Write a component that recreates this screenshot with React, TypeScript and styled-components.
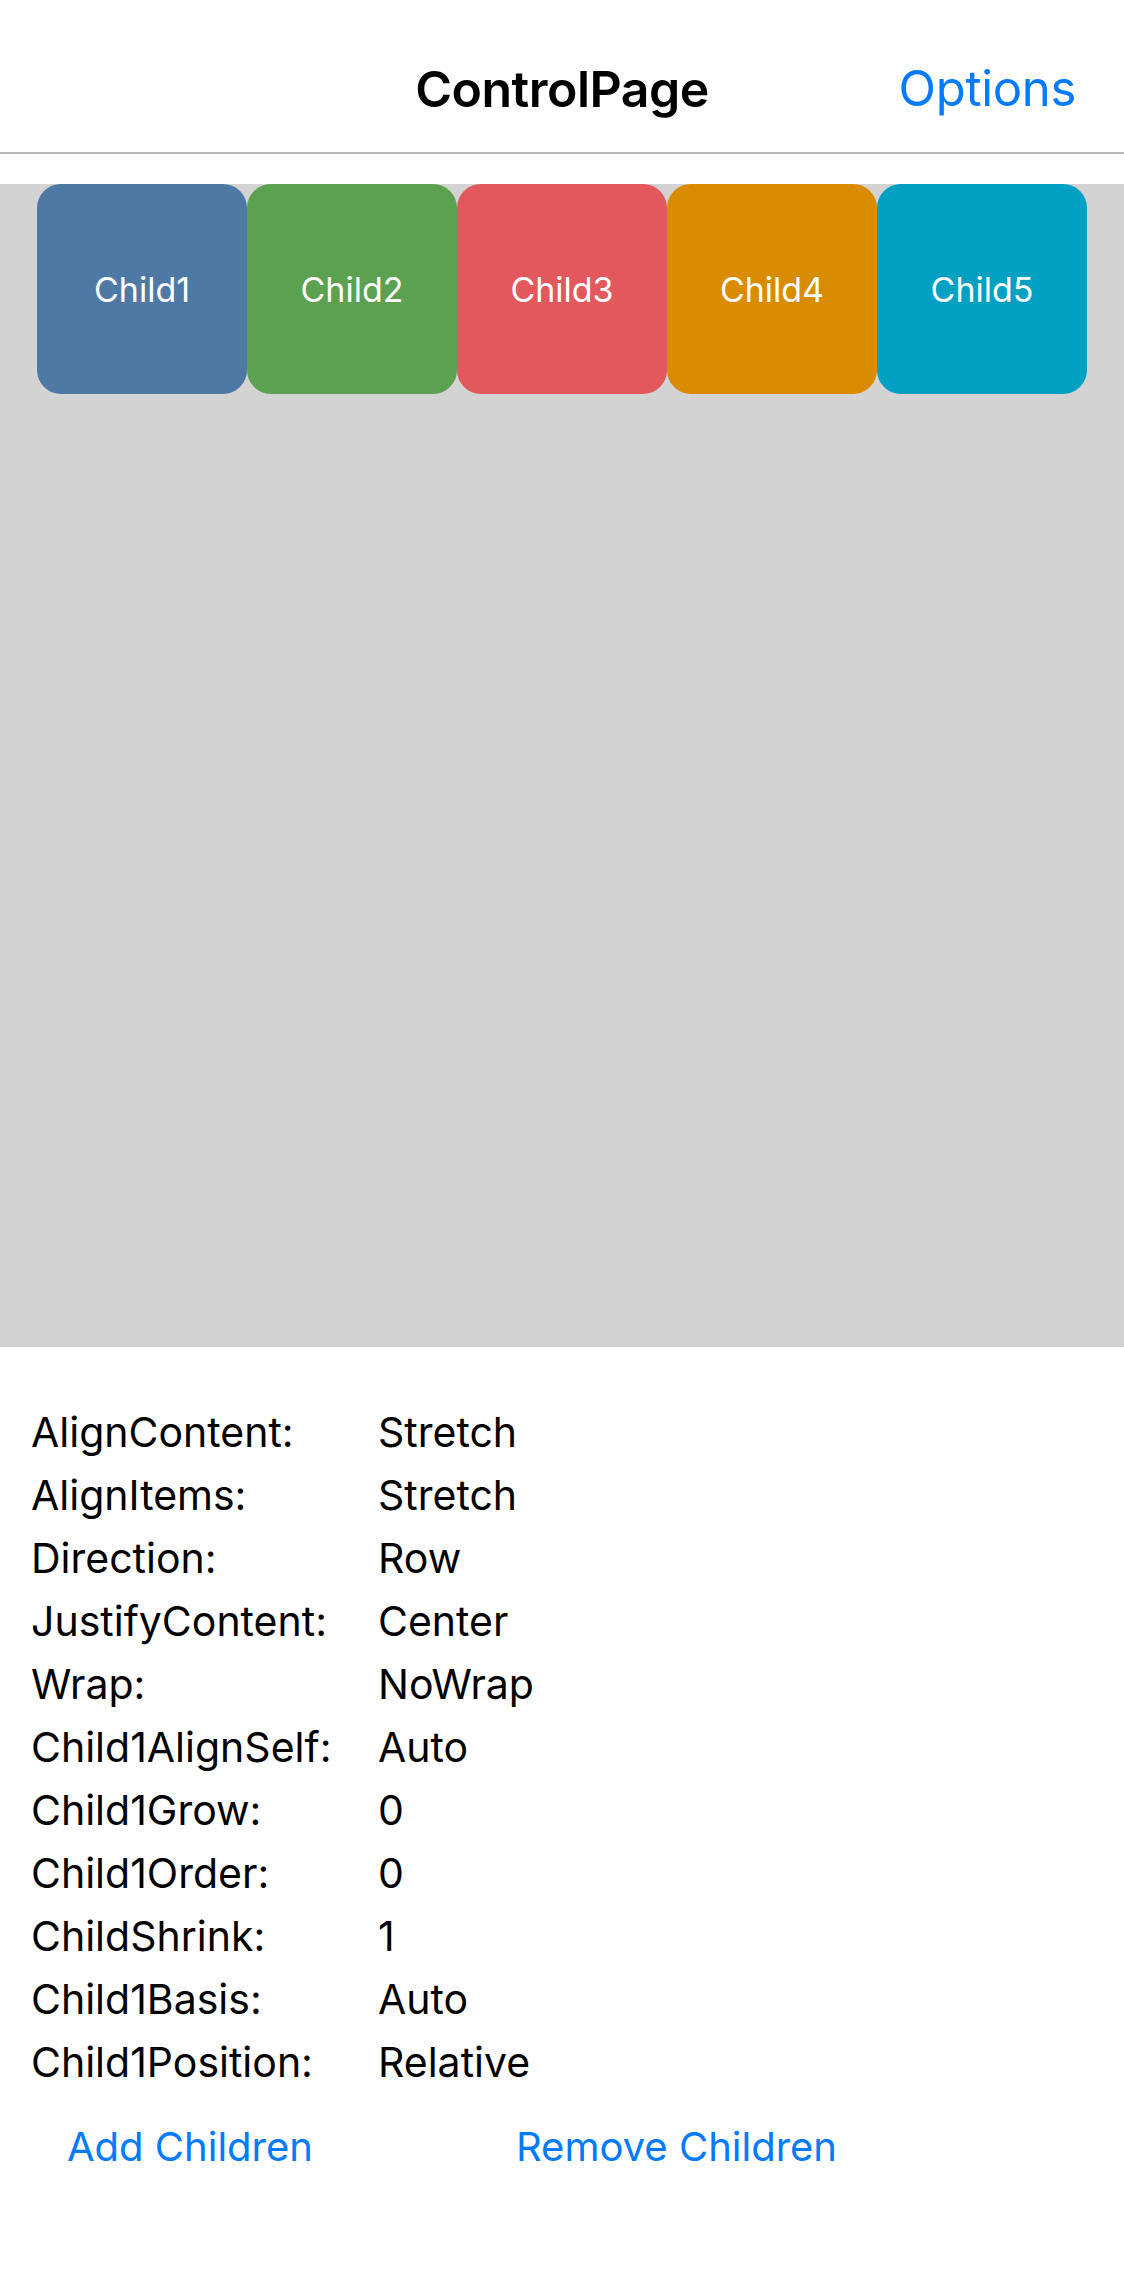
import React from "react";
import styled, { createGlobalStyle } from "styled-components";

const Global = createGlobalStyle`
  html, body { margin: 0; padding: 0; background: #ffffff; }
  body { font-family: Inter, "Liberation Sans", sans-serif; -webkit-font-smoothing: antialiased; }
`;

const Page = styled.div`
  width: 1124px;
  min-height: 2286px;
  background: #ffffff;
  display: flex;
  flex-direction: column;
`;

const NavBar = styled.header`
  border-bottom: 2px solid #b8b8b8;
  display: grid;
  grid-template-columns: 1fr auto 1fr;
  align-items: start;
  padding-top: 58px;
  box-sizing: border-box;
  height: 154px;
`;

const Title = styled.h1`
  grid-column: 2;
  margin: 0;
  font-size: 50px;
  line-height: 62px;
  font-weight: 600;
  color: #000000;
  letter-spacing: -0.5px;
`;

const NavAction = styled.span`
  grid-column: 3;
  justify-self: end;
  padding-right: 48px;
  font-size: 49px;
  line-height: 62px;
  font-weight: 400;
  color: #007aff;
  letter-spacing: -0.3px;
`;

const Canvas = styled.section`
  margin-top: 30px;
  height: 1163px;
  background: #d3d3d3;
  display: flex;
  flex-direction: row;
  justify-content: center;
  align-items: flex-start;
`;

const ChildBox = styled.div<{ $bg: string }>`
  width: 210px;
  height: 210px;
  border-radius: 24px;
  background: ${(p) => p.$bg};
  display: flex;
  align-items: center;
  justify-content: center;
  color: #ffffff;
  font-size: 34px;
  font-weight: 400;
`;

const Props = styled.div`
  display: grid;
  grid-template-columns: 347px auto;
  padding: 54px 0 0 31px;
  font-size: 41px;
  line-height: 63px;
  color: #000000;
`;

const Label = styled.span``;
const Value = styled.span``;

const Buttons = styled.div`
  display: flex;
  gap: 203px;
  padding: 21px 0 0 67px;
`;

const LinkButton = styled.button`
  background: none;
  border: none;
  padding: 0;
  font-family: inherit;
  font-size: 40px;
  line-height: 63px;
  color: #007aff;
  cursor: pointer;
`;

const children = [
  { name: "Child1", color: "#4f79a5" },
  { name: "Child2", color: "#5ba150" },
  { name: "Child3", color: "#e2585c" },
  { name: "Child4", color: "#d98c00" },
  { name: "Child5", color: "#00a0c3" },
];

const props: [string, string][] = [
  ["AlignContent:", "Stretch"],
  ["AlignItems:", "Stretch"],
  ["Direction:", "Row"],
  ["JustifyContent:", "Center"],
  ["Wrap:", "NoWrap"],
  ["Child1AlignSelf:", "Auto"],
  ["Child1Grow:", "0"],
  ["Child1Order:", "0"],
  ["ChildShrink:", "1"],
  ["Child1Basis:", "Auto"],
  ["Child1Position:", "Relative"],
];

export default function App() {
  return (
    <Page>
      <Global />
      <NavBar>
        <Title>ControlPage</Title>
        <NavAction>Options</NavAction>
      </NavBar>
      <Canvas>
        {children.map((c) => (
          <ChildBox key={c.name} $bg={c.color}>
            {c.name}
          </ChildBox>
        ))}
      </Canvas>
      <Props>
        {props.map(([k, v]) => (
          <React.Fragment key={k}>
            <Label>{k}</Label>
            <Value>{v}</Value>
          </React.Fragment>
        ))}
      </Props>
      <Buttons>
        <LinkButton>Add Children</LinkButton>
        <LinkButton>Remove Children</LinkButton>
      </Buttons>
    </Page>
  );
}
